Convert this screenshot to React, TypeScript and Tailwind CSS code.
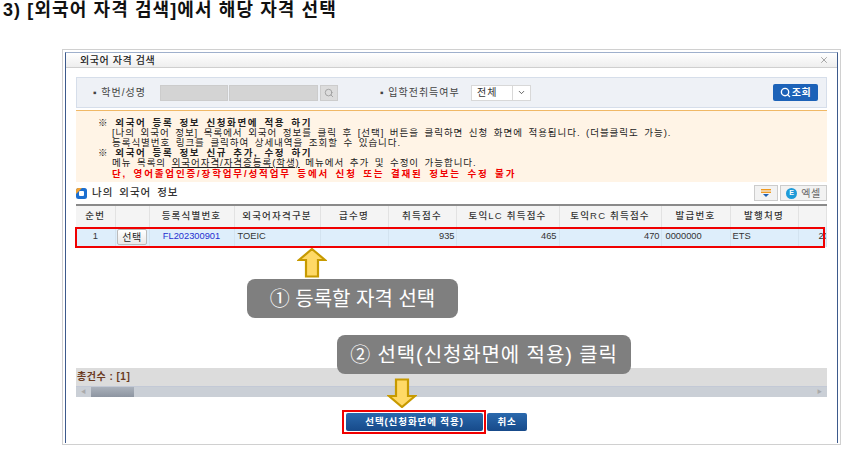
import { Search, ChevronDown, X } from 'lucide-react';

const KR = "font-['Liberation_Sans','Noto_Sans_CJK_KR',sans-serif]";

const columns = [
  { label: '순번', width: 39 },
  { label: '', width: 34 },
  { label: '등록식별번호', width: 85 },
  { label: '외국어자격구분', width: 86 },
  { label: '급수명', width: 68 },
  { label: '취득점수', width: 68 },
  { label: '토익LC 취득점수', width: 103 },
  { label: '토익RC 취득점수', width: 102 },
  { label: '발급번호', width: 69 },
  { label: '발행처명', width: 68 },
  { label: '', width: 28 },
];

function UpArrow() {
  return (
    <svg width="30" height="30" viewBox="0 0 30 30" className="block">
      <path d="M15 1 L28 12 L21 12 L21 28.5 L9 28.5 L9 12 L2 12 Z" fill="#ffd966" stroke="#c79a00" strokeWidth="2.2" />
    </svg>
  );
}

function DownArrow() {
  return (
    <svg width="30" height="30" viewBox="0 0 30 30" className="block">
      <path d="M9 1.5 L21 1.5 L21 18 L28 18 L15 29 L2 18 L9 18 Z" fill="#ffd966" stroke="#c79a00" strokeWidth="2.2" />
    </svg>
  );
}

function Callout({ children, className }: { children: React.ReactNode; className: string }) {
  return (
    <div className={`absolute flex items-center justify-center rounded-lg bg-[#7f7f7f] text-[20px] text-white ${className}`}>
      {children}
    </div>
  );
}

export default function App() {
  return (
    <div className={`relative h-[457px] w-[845px] overflow-hidden bg-white ${KR}`}>
      <h1 className="pl-[3px] text-[18px] font-semibold leading-[20px] tracking-[1.1px] text-[#111]">
        3) [외국어 자격 검색]에서 해당 자격 선택
      </h1>

      <div className="ml-[62px] mt-[29px] h-[396px] w-[779px] border border-[#d0d0d0] px-[2px] pt-[2px]">
        <div className="flex h-[391px] w-[773px] flex-col border-x border-t border-[#3d5a8c] border-t-[#9fb0cc]">
          <div className="flex h-[15px] items-center justify-between border-b border-[#cfcfcf] bg-gradient-to-b from-white to-[#eeeeee] pl-[14px] pr-[8px] text-[10px] font-medium tracking-[0.6px] text-[#222]">
            <span>외국어 자격 검색</span>
            <X size={10} strokeWidth={1.5} className="text-[#777]" />
          </div>

          <div className="flex flex-1 flex-col px-[10px] pt-[9px]">
            {/* search bar */}
            <div className="flex h-[31px] items-center border border-[#d6deea] bg-[#eef1f6] pl-[16px] pr-[8px] text-[10px] tracking-[1px] text-[#444]">
              <span className="w-[67px] whitespace-nowrap">▪ 학번/성명</span>
              <div className="h-[16px] w-[68px] border border-[#ccc] bg-[#d4d4d4]" />
              <div className="ml-[1px] h-[16px] w-[89px] border border-[#ccc] bg-[#d4d4d4]" />
              <div className="ml-[2px] flex h-[16px] w-[18px] items-center justify-center border border-[#ccc] bg-[#dcdcdc]">
                <Search size={10} className="text-[#999]" />
              </div>
              <span className="ml-[42px] w-[91px] whitespace-nowrap">▪ 입학전취득여부</span>
              <div className="flex h-[16px] w-[60px] items-center border border-[#d8d8d8] bg-white pl-[5px] text-[#333]">
                <span className="flex-1">전체</span>
                <span className="flex h-full w-[18px] items-center justify-center border-l border-[#d8d8d8]">
                  <ChevronDown size={9} />
                </span>
              </div>
              <button className="ml-auto flex h-[17px] w-[45px] items-center justify-center gap-[1px] rounded-[2px] bg-[#1c62b8] text-[10px] font-bold tracking-[0.5px] text-white">
                <Search size={11} strokeWidth={3} />
                조회
              </button>
            </div>

            {/* notice */}
            <div className="mt-[2px] h-[72px] border-t border-[#f0b866] bg-[#fff4e6] pl-[22px] pt-[6.5px] text-[9.5px] leading-[10.2px] tracking-[0.95px] text-[#222] [word-spacing:2px]">
              <p className="font-bold tracking-[1.6px]">※ 외국어 등록 정보 신청화면에 적용 하기</p>
              <p className="pl-[14px]">[나의 외국어 정보] 목록에서 외국어 정보를 클릭 후 [선택] 버튼을 클릭하면 신청 화면에 적용됩니다. (더블클릭도 가능).</p>
              <p className="pl-[14px]">등록식별번호 링크를 클릭하여 상세내역을 조회할 수 있습니다.</p>
              <p className="font-bold tracking-[1.6px]">※ 외국어 등록 정보 신규 추가, 수정 하기</p>
              <p className="pl-[14px]">
                메뉴 목록의 <span className="underline">외국어자격/자격증등록(학생)</span> 메뉴에서 추가 및 수정이 가능합니다.
              </p>
              <p className="pl-[14px] font-bold tracking-[1.85px] text-[#f00000]">단, 영어졸업인증/장학업무/성적업무 등에서 신청 또는 결재된 정보는 수정 불가</p>
            </div>

            {/* section title */}
            <div className="flex h-[22px] items-center justify-between">
              <div className="flex items-center gap-[5px] text-[10.5px] font-medium tracking-[1px] text-[#333] [word-spacing:2px]">
                <svg width="11" height="11" viewBox="0 0 11 11">
                  <rect x="0" y="0" width="11" height="11" rx="2.5" fill="#1c6fd0" />
                  <path d="M0 2.5 A2.5 2.5 0 0 1 2.5 0 L6 0 L0 6 Z" fill="#f0a030" />
                  <rect x="3" y="3" width="5" height="5" rx="1" fill="#fff" />
                </svg>
                나의 외국어 정보
              </div>
              <div className="flex gap-[2px]">
                <div className="flex h-[16px] w-[24px] items-center justify-center border border-[#ccc] bg-[#f2f2f2]">
                  <svg width="10" height="8" viewBox="0 0 10 8">
                    <rect x="0" y="0" width="10" height="1.4" fill="#f09a20" />
                    <rect x="0" y="2.6" width="10" height="1.4" fill="#f09a20" />
                    <path d="M2 5 L8 5 L5 8 Z" fill="#2060b0" />
                  </svg>
                </div>
                <div className="flex h-[16px] w-[47px] items-center justify-center gap-[4px] border border-[#ccc] bg-[#f2f2f2] text-[10px] tracking-[0.5px] text-[#666]">
                  <span className="flex h-[11px] w-[11px] items-center justify-center rounded-full bg-[#1f9bd8] text-[7px] font-bold text-white">E</span>
                  엑셀
                </div>
              </div>
            </div>

            {/* grid */}
            <div className="flex h-[193px] flex-col overflow-hidden border-t-2 border-[#8a8a8a]">
              <table className="w-[750px] table-fixed border-collapse text-[9.3px] text-[#333]">
                <colgroup>
                  {columns.map((c, i) => (
                    <col key={i} style={{ width: c.width }} />
                  ))}
                </colgroup>
                <thead>
                  <tr className="h-[21px] bg-[#f4f4f4]">
                    {columns.map((c, i) => (
                      <th key={i} className="whitespace-nowrap border-r border-[#e2e2e2] p-0 text-[9.5px] font-medium tracking-[1.2px] text-[#333]">
                        {c.label}
                      </th>
                    ))}
                  </tr>
                </thead>
                <tbody>
                  <tr className="h-[20px] bg-[#deeefb] [&>td]:border-r [&>td]:border-[#d3e3f0]">
                    <td className="p-0 text-center">1</td>
                    <td className="p-0 text-center">
                      <button className="h-[16px] w-[30px] rounded-[2px] border border-[#bbb] bg-gradient-to-b from-white to-[#e9e9e9] text-[10px] tracking-[0.6px] text-[#222]">
                        선택
                      </button>
                    </td>
                    <td className="p-0 text-center text-[#1f2fd0]">FL202300901</td>
                    <td className="p-0 pl-[3px]">TOEIC</td>
                    <td className="p-0" />
                    <td className="p-0 pr-[1px] text-right">935</td>
                    <td className="p-0 pr-[2px] text-right">465</td>
                    <td className="p-0 pr-[1px] text-right">470</td>
                    <td className="p-0 pl-[4px]">0000000</td>
                    <td className="p-0 pl-[2px]">ETS</td>
                    <td className="overflow-hidden whitespace-nowrap p-0 pl-[20px]">20</td>
                  </tr>
                </tbody>
              </table>
              <div className="mt-auto flex h-[18px] items-center bg-[#dcdcdc] pl-[1px] text-[10px] font-bold leading-none tracking-[0.5px] text-[#6b3a1e]">
                총건수 : [1]
              </div>
              <div className="flex h-[11px] items-center border-t border-[#c3c9d6] bg-[#cacfd6] px-[5px]">
                <span className="text-[5px] text-[#aaa]">◀</span>
                <div className="ml-[5px] h-full w-[43px] bg-gradient-to-b from-[#aab1bb] to-[#8d95a1]" />
                <span className="ml-auto text-[5px] text-[#aaa]">▶</span>
              </div>
            </div>

            {/* actions */}
            <div className="flex gap-[4px] pl-[270px] pt-[16px]">
              <button className="h-[18px] w-[137px] rounded-[2px] bg-gradient-to-b from-[#2a69ad] to-[#174a8a] text-[9.5px] font-bold tracking-[0.9px] text-white">
                선택(신청화면에 적용)
              </button>
              <button className="h-[18px] w-[40px] rounded-[2px] bg-gradient-to-b from-[#2a69ad] to-[#174a8a] text-[9.5px] font-bold tracking-[0.8px] text-white">
                취소
              </button>
            </div>
          </div>
        </div>
      </div>

      {/* annotations over the dialog */}
      <div className="absolute left-[75px] top-[227px] h-[21px] w-[750px] border-2 border-[#f00000]" />
      <div className="absolute left-[342px] top-[410px] h-[24px] w-[144px] border-2 border-[#f00000]" />
      <div className="absolute left-[297px] top-[248px]"><UpArrow /></div>
      <div className="absolute left-[387px] top-[378px]"><DownArrow /></div>
      <Callout className="left-[247px] top-[279px] h-[39px] w-[211px]">① 등록할 자격 선택</Callout>
      <Callout className="left-[337px] top-[335px] h-[39px] w-[294px] tracking-[0.9px]">② 선택(신청화면에 적용) 클릭</Callout>
    </div>
  );
}
